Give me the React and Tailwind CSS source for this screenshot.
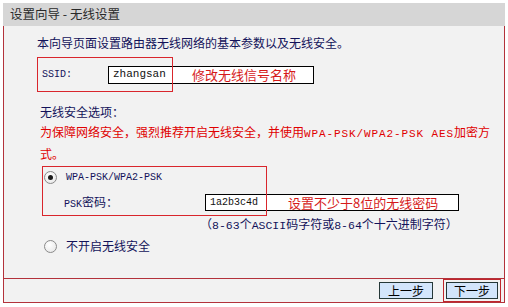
import React from "react";

const CJK = { fontFamily: '"Liberation Mono","Noto Sans CJK SC",monospace' };
const SANS = { fontFamily: '"Noto Sans CJK SC","Liberation Sans",sans-serif' };

function Radio({ checked }) {
  return (
    <span className="w-[13px] h-[13px] rounded-full border border-[#8a8a8a] bg-[radial-gradient(circle_at_40%_35%,#ffffff,#e4e4e4)] flex items-center justify-center shrink-0">
      {checked && <span className="w-[5px] h-[5px] rounded-full bg-[#1a1a1a]" />}
    </span>
  );
}

export default function App() {
  return (
    <div className="w-[508px] h-[307px] bg-white pt-[3px] pl-[3px]" style={SANS}>
      <div className="w-[502px] h-[23px] bg-[#d6d6d6] flex items-center pl-[7px] text-[12.5px] text-[#2a2a2a] leading-none whitespace-pre">
        设置向导 - 无线设置
      </div>
      <div className="w-[502px] border-x border-b border-[#b3323b] bg-[#f2f2f2]">
        <div className="h-[252px] flex flex-col text-[12px] text-[#12125a]">
          <div className="mt-[9px] ml-[33px] leading-[16px] whitespace-nowrap" style={SANS}>
            本向导页面设置路由器无线网络的基本参数以及无线安全。
          </div>

          <div className="relative mt-[6px] ml-[33px] h-[35px] flex items-center">
            <span className="w-[71px] pl-[5px] text-[10px] leading-none" style={CJK}>SSID:</span>
            <div className="w-[206px] h-[18px] border border-black bg-white flex items-center">
              <span className="w-[83px] pl-[4px] text-[11px] text-[#111] leading-none" style={CJK}>zhangsan</span>
              <span className="text-[13px] text-[#d61a1a] leading-none" style={SANS}>修改无线信号名称</span>
            </div>
            <div className="absolute left-0 top-0 w-[136px] h-[35px] border border-[#d9262c]" />
          </div>

          <div className="mt-[12px] ml-[36px] leading-[16px]" style={SANS}>无线安全选项：</div>
          <div className="mt-[2px] ml-[36px] leading-[19px] text-[#e00000] whitespace-nowrap" style={SANS}>
            为保障网络安全，强烈推荐开启无线安全，并使用
            <span className="text-[11px] tracking-[0.9px]" style={CJK}>WPA-PSK/WPA2-PSK AES</span>
            加密方
            <br />
            式。
          </div>

          <div className="relative mt-[3px] ml-[38px]">
            <div className="h-[23px] flex items-center pl-[2px]">
              <Radio checked />
              <span className="ml-[9px] text-[10px] text-[#12125a] leading-none" style={CJK}>WPA-PSK/WPA2-PSK</span>
            </div>
            <div className="mt-[5px] h-[17px] flex items-center">
              <span className="w-[163px] pl-[22px] leading-none whitespace-nowrap" style={SANS}>
                <span className="text-[10px]" style={CJK}>PSK</span>密码：
              </span>
              <div className="w-[254px] h-[17px] border border-black bg-white flex items-center">
                <span className="w-[82px] pl-[4px] text-[10px] text-[#111] leading-none" style={CJK}>1a2b3c4d</span>
                <span className="text-[13px] text-[#d61a1a] leading-none" style={SANS}>设置不少于8位的无线密码</span>
              </div>
            </div>
            <div className="absolute left-0 top-0 w-[225px] h-[50px] border border-[#d9262c]" />
          </div>

          <div className="mt-[5px] ml-[196px] leading-[16px] whitespace-nowrap" style={SANS}>
            （<span className="text-[11.5px]" style={CJK}>8-63</span>个<span className="text-[11.5px]" style={CJK}>ASCII</span>码字符或<span className="text-[11.5px]" style={CJK}>8-64</span>个十六进制字符）
          </div>

          <div className="mt-[4px] ml-[40px] h-[16px] flex items-center">
            <Radio />
            <span className="ml-[9px] leading-none" style={SANS}>不开启无线安全</span>
          </div>
        </div>
        <div className="h-[24px] border-t border-[#b3323b] flex items-center justify-end pr-[3px]">
          <div className="w-[54px] h-[17px] border border-[#253838] bg-[#d3e5fb] flex items-center justify-center text-[12px] text-black leading-none mr-[10px]">
            上一步
          </div>
          <div className="border border-[#c0262c] p-[2px]">
            <div className="w-[52px] h-[17px] border border-[#253838] bg-[#d3e5fb] flex items-center justify-center text-[12px] text-black leading-none">
              下一步
            </div>
          </div>
        </div>
      </div>
    </div>
  );
}
